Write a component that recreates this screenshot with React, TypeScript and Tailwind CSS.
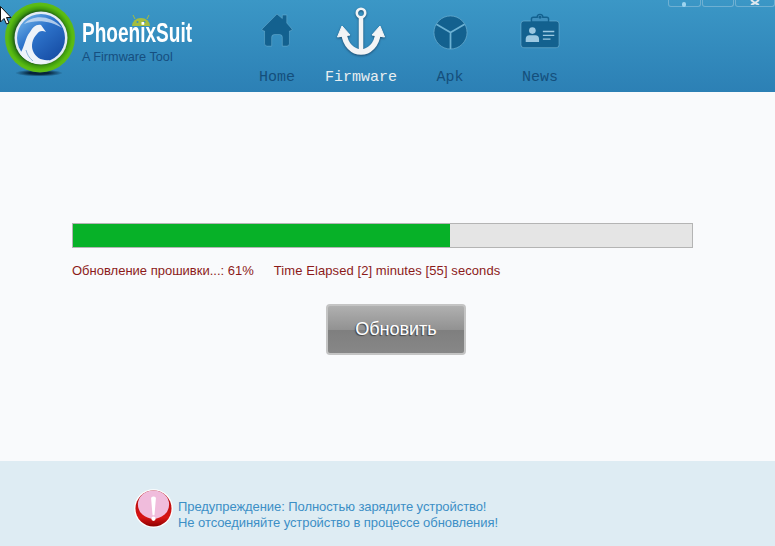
const navItems = [
  { label: 'Home', width: 'w-[84px]', pad: 'pb-[6px]', active: false },
  { label: 'Firmware', width: 'w-[84px]', pad: 'pb-[1px]', active: true },
  { label: 'Apk', width: 'w-[94px]', pad: 'pb-[6px]', active: false },
  { label: 'News', width: 'w-[86px]', pad: 'pb-[6px]', active: false },
];

const windowButtons = ['w-[33px]', 'w-[32px]', 'w-[40px]'];

function Logo() {
  return (
    <svg width="80" height="80" viewBox="0 0 80 80" className="shrink-0">
      <defs>
        <radialGradient id="ring" cx="50%" cy="50%" r="50%">
          <stop offset="74%" stopColor="#1f5f14" />
          <stop offset="82%" stopColor="#3f9a10" />
          <stop offset="92%" stopColor="#58bb10" />
          <stop offset="100%" stopColor="#5eb91c" />
        </radialGradient>
        <linearGradient id="globe" x1="0.15" y1="0.05" x2="0.85" y2="0.9">
          <stop offset="0%" stopColor="#6aaee6" />
          <stop offset="40%" stopColor="#2e74cb" />
          <stop offset="100%" stopColor="#174ea6" />
        </linearGradient>
        <radialGradient id="logoShadow">
          <stop offset="40%" stopColor="#06243b" />
          <stop offset="100%" stopColor="#06243b" stopOpacity="0" />
        </radialGradient>
      </defs>
      <ellipse cx="39" cy="73" rx="24" ry="3.5" fill="url(#logoShadow)" />
      <circle cx="40" cy="37.5" r="35" fill="url(#ring)" />
      <circle cx="41" cy="38" r="26.5" fill="#e4ecf4" />
      <circle cx="41" cy="38" r="24" fill="url(#globe)" />
      <path d="M24 24 C32 15 50 14 62 28 C52 21 36 19 24 24 Z" fill="#cfe0f2" fillOpacity="0.8" />
      <path
        d="M30 32 C33 27 36 24 41 25 L46 32 C42 30 39 31 37 34 C32 39 31 46 33 51 C36 58 42 61 50 60 C44 66 30 66 20 54 C25 46 25 38 30 32 Z"
        fill="#eef3f9"
      />
      <path d="M26 50 C27 54 29 58 33 61" fill="none" stroke="#8cb4d8" strokeWidth="1" />
    </svg>
  );
}

function AndroidHead() {
  return (
    <svg width="20" height="11" viewBox="0 0 20 11" className="absolute left-[49px] top-[15px]">
      <path d="M1 11 A9 8 0 0 1 19 11 Z" fill="#a5bd3e" />
      <path d="M4 4 L2 0 M16 4 L18 0" stroke="#a5bd3e" strokeWidth="1" />
      <circle cx="6.5" cy="7" r="1" fill="#3a8fbd" />
      <circle cx="13.5" cy="7" r="1" fill="#3a8fbd" />
    </svg>
  );
}

function HomeIcon() {
  return (
    <svg width="32" height="38" viewBox="0 0 36 42">
      <path
        d="M18 2 L24 7 V3 H29 V12 L35 19 Q35 21 32 21 V35 Q32 38 29 38 H24 V28 Q24 25 21 25 H15 Q12 25 12 28 V38 H7 Q4 38 4 35 V21 Q1 21 1 19 Z"
        fill="#13618f"
        stroke="#7ab8d8"
        strokeOpacity="0.5"
        strokeWidth="1"
      />
    </svg>
  );
}

function AnchorIcon() {
  return (
    <svg width="48" height="48" viewBox="0 0 48 48" style={{ filter: 'drop-shadow(0 1px 1px rgba(20,50,80,.7))' }}>
      <circle cx="24" cy="6" r="4.2" fill="none" stroke="#f2f4f6" strokeWidth="2.6" />
      <path d="M24 10 V45" stroke="#f2f4f6" strokeWidth="4.5" />
      <path d="M7 26 C8 38 16 45 24 45 C32 45 40 38 41 26" fill="none" stroke="#f2f4f6" strokeWidth="5.5" strokeLinecap="round" />
      <path d="M0.5 30 L5 19 L13 28 Z M35 28 L43 19 L47.5 30 Z" fill="#f2f4f6" stroke="#f2f4f6" strokeLinejoin="round" />
    </svg>
  );
}

function ApkIcon() {
  return (
    <svg width="35" height="35" viewBox="0 0 36 36">
      <circle cx="18" cy="18" r="17" fill="#13618f" stroke="#7ab8d8" strokeOpacity="0.6" />
      <path d="M18 18 V35 M18 18 L3.5 9.5 M18 18 L32.5 9.5" stroke="#6db2d4" strokeWidth="1.8" />
    </svg>
  );
}

function NewsIcon() {
  return (
    <svg width="40" height="37" viewBox="0 0 42 38">
      <rect x="1" y="8" width="40" height="28" rx="3" fill="#13618f" stroke="#7ab8d8" strokeOpacity="0.6" />
      <path d="M12 9 V6 Q12 4 14 4 H18 A3 3 0 0 1 24 4 H28 Q30 4 30 6 V9 Z" fill="#3f8fbd" stroke="#13618f" strokeWidth="1.5" />
      <circle cx="21" cy="4" r="1.5" fill="#13618f" />
      <circle cx="13" cy="18" r="3.5" fill="#9cc9e2" />
      <path d="M6 30 V27 Q6 23 10 23 H16 Q20 23 20 27 V30 Z" fill="#9cc9e2" />
      <path d="M24 19 H36 M24 23 H36 M24 27 H32" stroke="#9cc9e2" strokeWidth="1.4" />
    </svg>
  );
}

function WarningIcon() {
  return (
    <svg width="39" height="39" viewBox="0 0 40 40" className="shrink-0">
      <defs>
        <linearGradient id="warnBody" x1="0" y1="0" x2="0" y2="1">
          <stop offset="0%" stopColor="#a80a0a" />
          <stop offset="75%" stopColor="#d81414" />
          <stop offset="100%" stopColor="#8c0000" />
        </linearGradient>
      </defs>
      <circle cx="20" cy="20" r="19.8" fill="#ffffff" />
      <circle cx="20" cy="20" r="18.5" fill="url(#warnBody)" />
      <ellipse cx="20" cy="16" rx="16" ry="14.5" fill="#f0bcdc" />
      <path d="M17.5 9 Q20 6.5 22.5 9 L21 27 H19 Z" fill="#ffffff" />
      <circle cx="20" cy="30.5" r="2.2" fill="#ffffff" />
    </svg>
  );
}

function navIcon(label: string) {
  if (label === 'Home') return <HomeIcon />;
  if (label === 'Firmware') return <AnchorIcon />;
  if (label === 'Apk') return <ApkIcon />;
  return <NewsIcon />;
}

export default function App() {
  return (
    <div className="relative flex h-[546px] w-[775px] flex-col overflow-hidden bg-[#f9fafc] font-['Liberation_Sans',Arial,sans-serif]">
      {/* Шапка */}
      <header className="flex h-[92px] shrink-0 bg-gradient-to-b from-[#3b97c6] to-[#2c80b5]">
        <Logo />
        <div className="relative ml-[2px] w-[153px] pt-[18px]">
          <AndroidHead />
          <div className="relative h-[30px] origin-left scale-x-[0.68] whitespace-nowrap text-[28px] font-bold leading-[30px] text-white">
            PhoenixSuit
          </div>
          <div className="mt-[2px] text-[12.7px] leading-[14px] text-[#164f80]">A Firmware Tool</div>
        </div>
        <nav className="flex">
          {navItems.map((item) => (
            <div key={item.label} className={`flex flex-col items-center ${item.width}`}>
              <div className={`flex h-[56px] items-end justify-center ${item.pad}`}>{navIcon(item.label)}</div>
              <div
                className={`mt-[13px] font-['Liberation_Mono',monospace] text-[15px] leading-[18px] ${
                  item.active ? 'text-[#e8eef0]' : 'text-[#144f7c]'
                }`}
              >
                {item.label}
              </div>
            </div>
          ))}
        </nav>
      </header>

      {/* Кнопки окна */}
      <div className="absolute right-0 top-0 flex gap-[1px]">
        {windowButtons.map((w, i) => (
          <div key={i} className={`relative h-[7px] rounded-b-[3px] border border-t-0 border-[#6fb0d2] ${w}`}>
            {i === 0 && <div className="absolute left-[13px] top-[2px] h-[5px] w-[4px] rounded-full bg-[#9ed4f0]" />}
            {i === 2 && (
              <svg width="14" height="5" viewBox="0 0 14 5" className="absolute left-[12px] top-0">
                <path d="M3 0 L7 3 L11 0 M7 3 L3 5 M7 3 L11 5" stroke="#dde7ee" strokeWidth="2" fill="none" />
              </svg>
            )}
          </div>
        ))}
      </div>

      {/* Курсор */}
      <svg width="12" height="24" viewBox="0 0 12 24" className="absolute left-0 top-[6px]">
        <path d="M0.5 0.5 V16 L4 12.5 L6.5 18 L9 17 L6.5 11.5 H11 Z" fill="#ffffff" stroke="#111111" strokeWidth="1" />
      </svg>

      {/* Прогресс */}
      <main className="flex-1 pl-[72px] pt-[131px]">
        <div className="flex h-[25px] w-[621px] border border-[#b4b4b4] bg-[#e5e5e5]">
          <div className="h-full w-[377px] bg-[#07b128]" />
        </div>
        <div className="mt-[16px] flex text-[13px] leading-[14px] text-[#8c1a1a]">
          <span>Обновление прошивки...: 61%</span>
          <span className="ml-[20px] tracking-[0.08px]">Time Elapsed [2] minutes [55] seconds</span>
        </div>
        <button className="ml-[254px] mt-[26px] flex h-[51px] w-[140px] items-center justify-center rounded-[4px] border-2 border-[#c4c4c4] bg-[linear-gradient(to_bottom,#b0b0b0_0%,#929292_50%,#7f7f7f_52%,#878787_100%)] text-[18px] text-white [text-shadow:-1px_1px_1px_#444]">
          Обновить
        </button>
      </main>

      {/* Предупреждение */}
      <footer className="flex h-[85px] shrink-0 items-start bg-[#deecf3] pl-[134px] pt-[28px]">
        <WarningIcon />
        <div className="ml-[5px] mt-[10px] text-[13px] leading-[16px] tracking-[-0.07px] text-[#3c8fc6]">
          <div>Предупреждение: Полностью зарядите устройство!</div>
          <div>Не отсоединяйте устройство в процессе обновления!</div>
        </div>
      </footer>
    </div>
  );
}
